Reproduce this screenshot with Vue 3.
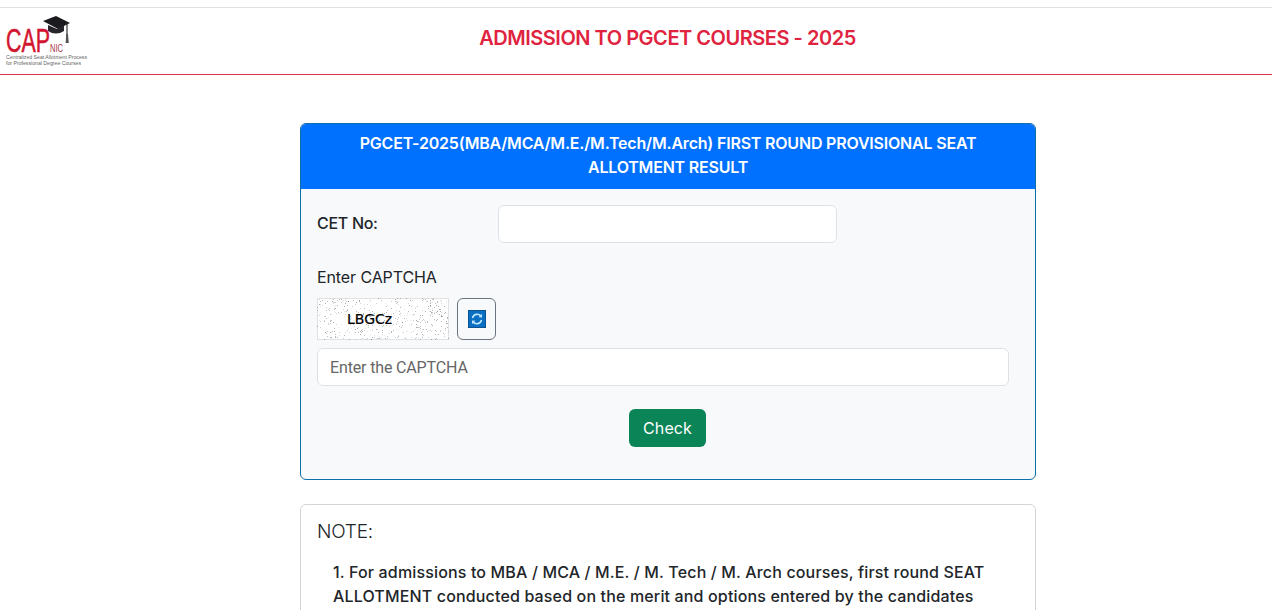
<script setup>
import { ref } from 'vue'

const cetNo = ref('')
const captcha = ref('')

// speckle behind the captcha text, fixed seed so it stays the same between reloads
let seed = 17
function rnd() {
  seed = (seed * 16807) % 2147483647
  return seed / 2147483647
}
const specks = []
for (let i = 0; i < 470; i++) {
  specks.push({ x: Math.floor(rnd() * 132), y: Math.floor(rnd() * 42), o: 0.1 + rnd() * 0.4 })
}
</script>

<template>
  <div class="page">
    <header class="top">
      <svg class="logo" width="92" height="54" viewBox="0 0 92 54">
        <path d="M43 7 L56 2 L70 9 L58 15 Z" fill="#1b1b1f" />
        <path d="M48 11 L48 17 Q56 22 64 17 L64 11 L57 15 Z" fill="#26262a" />
        <path d="M67 9 L67 22" stroke="#333" stroke-width="1.2" />
        <path d="M66.2 20 h1.8 l.8 9 h-3.2 Z" fill="#555" />
        <text x="6" y="38" class="logo-cap" textLength="44" lengthAdjust="spacingAndGlyphs">CAP</text>
        <text x="50" y="38" class="logo-nic" textLength="13" lengthAdjust="spacingAndGlyphs">NIC</text>
        <text x="6" y="45" class="logo-sub" textLength="81" lengthAdjust="spacingAndGlyphs">Centralized Seat Allotment Process</text>
        <text x="6" y="51" class="logo-sub" textLength="75" lengthAdjust="spacingAndGlyphs">for Professional Degree Courses</text>
      </svg>
      <h1 class="title">ADMISSION TO PGCET COURSES - 2025</h1>
    </header>

    <main class="content">
      <section class="card">
        <div class="card-head">
          PGCET-2025(MBA/MCA/M.E./M.Tech/M.Arch) FIRST ROUND PROVISIONAL SEAT ALLOTMENT RESULT
        </div>
        <div class="card-body">
          <div class="cet-row">
            <label class="cet-label">CET No:</label>
            <input v-model="cetNo" class="field cet-input" type="text" />
          </div>
          <div class="captcha-label">Enter CAPTCHA</div>
          <div class="captcha-row">
            <svg class="captcha" width="132" height="42" viewBox="0 0 132 42">
              <rect x="0.5" y="0.5" width="131" height="41" fill="#fff" stroke="#e2e2e2" />
              <rect v-for="(s, i) in specks" :key="i" :x="s.x" :y="s.y" width="1" height="1" fill="#555" :opacity="s.o" />
              <text x="30" y="26" class="captcha-text">LBGCz</text>
            </svg>
            <button class="refresh" type="button" aria-label="Refresh">
              <svg width="18" height="18" viewBox="0 0 18 18">
                <rect width="18" height="18" fill="#0a6fc2" stroke="#0b3a63" />
                <path d="M4.5 8 A4.8 4.8 0 0 1 13 6.2" fill="none" stroke="#bfe6ff" stroke-width="1.6" />
                <path d="M13.5 10 A4.8 4.8 0 0 1 5 11.8" fill="none" stroke="#bfe6ff" stroke-width="1.6" />
                <path d="M14 3.8 L14 7.4 L10.6 7.2 Z M4 14.2 L4 10.6 L7.4 10.8 Z" fill="#bfe6ff" />
              </svg>
            </button>
          </div>
          <input v-model="captcha" class="field captcha-input" type="text" placeholder="Enter the CAPTCHA" />
          <div class="actions">
            <button class="check" type="button">Check</button>
          </div>
        </div>
      </section>

      <section class="note">
        <div class="note-title">NOTE:</div>
        <ol class="note-list">
          <li>1. For admissions to MBA / MCA / M.E. / M. Tech / M. Arch courses, first round SEAT ALLOTMENT conducted based on the merit and options entered by the candidates</li>
        </ol>
      </section>
    </main>
  </div>
</template>

<style>
html, body {
  margin: 0;
  overflow: hidden;
  background: #fff;
}
</style>

<style scoped>
.page {
  font-family: Inter, "Open Sans", sans-serif;
  color: #212529;
  padding-top: 7px;
}

.top {
  display: flex;
  align-items: center;
  height: 66px;
  border-top: 1px solid #dee2e6;
  border-bottom: 1px solid #dc3545;
}

.logo {
  flex: none;
  align-self: flex-start;
  margin-top: 6px;
}

.logo-cap {
  font-family: "Liberation Sans", sans-serif;
  font-size: 34px;
  fill: #d2152e;
  stroke: #d2152e;
  stroke-width: 0.5px;
}

.logo-nic {
  font-family: "Liberation Sans", sans-serif;
  font-size: 11px;
  fill: #a8384a;
}

.logo-sub {
  font-family: "Liberation Sans", sans-serif;
  font-size: 5.5px;
  fill: #666;
}

.title {
  flex: 1;
  margin: 0 29px 0 0;
  padding-bottom: 6px;
  text-align: center;
  font-size: 20px;
  line-height: 30px;
  font-weight: 600;
  letter-spacing: -0.47px;
  color: #e0233f;
}

.content {
  width: 736px;
  margin: 48px 0 0 300px;
}

.card {
  border: 1px solid #0d6ea8;
  border-radius: 6px;
  overflow: hidden;
  background: #f8f9fa;
}

.card-head {
  background: #0070ff;
  color: #fff;
  text-align: center;
  font-size: 16px;
  line-height: 24px;
  font-weight: 600;
  letter-spacing: -0.2px;
  padding: 7px 48px 10px;
}

.card-body {
  padding: 16px 16px 32px;
}

.cet-row {
  display: flex;
  align-items: center;
}

.cet-label {
  width: 181px;
  margin-top: -2px;
  font-size: 16px;
  font-weight: 500;
  letter-spacing: -0.3px;
}

.field {
  display: block;
  box-sizing: border-box;
  height: 38px;
  border: 1px solid #dee2e6;
  border-radius: 6px;
  background: #fff;
  padding: 6px 12px;
  font-family: Roboto, sans-serif;
  font-size: 16px;
}

.field::placeholder {
  color: #666;
  opacity: 1;
  letter-spacing: -0.15px;
}

.cet-input {
  width: 339px;
}

.captcha-label {
  margin-top: 22px;
  font-size: 16px;
  line-height: 24px;
  letter-spacing: -0.1px;
}

.captcha-row {
  display: flex;
  align-items: center;
  gap: 8px;
  margin-top: 9px;
}

.captcha {
  display: block;
}

.captcha-text {
  font-family: "DejaVu Sans", sans-serif;
  font-size: 14px;
  fill: #000;
  stroke: #000;
  stroke-width: 0.2px;
}

.refresh {
  display: flex;
  align-items: center;
  justify-content: center;
  width: 39px;
  height: 42px;
  padding: 0;
  border: 1px solid #6c757d;
  border-radius: 6px;
  background: #f8f9fa;
}

.captcha-input {
  width: 692px;
  margin-top: 8px;
}

.actions {
  display: flex;
  justify-content: center;
  margin-top: 23px;
  padding-right: 1px;
}

.check {
  height: 38px;
  width: 77px;
  border: none;
  border-radius: 6px;
  background: #0b8457;
  color: #fff;
  font-family: inherit;
  font-size: 16px;
  letter-spacing: 0.1px;
}

.note {
  margin-top: 24px;
  border: 1px solid #d3d5d8;
  border-radius: 6px;
  padding: 12px 16px 16px;
}

.note-title {
  font-size: 19px;
  line-height: 30px;
  font-weight: 300;
  letter-spacing: -0.2px;
}

.note-list {
  list-style: none;
  margin: 13px 0 0;
  padding: 0 16px;
}

.note-list li {
  font-size: 16px;
  line-height: 24px;
  font-weight: 500;
  letter-spacing: 0.15px;
}
</style>
